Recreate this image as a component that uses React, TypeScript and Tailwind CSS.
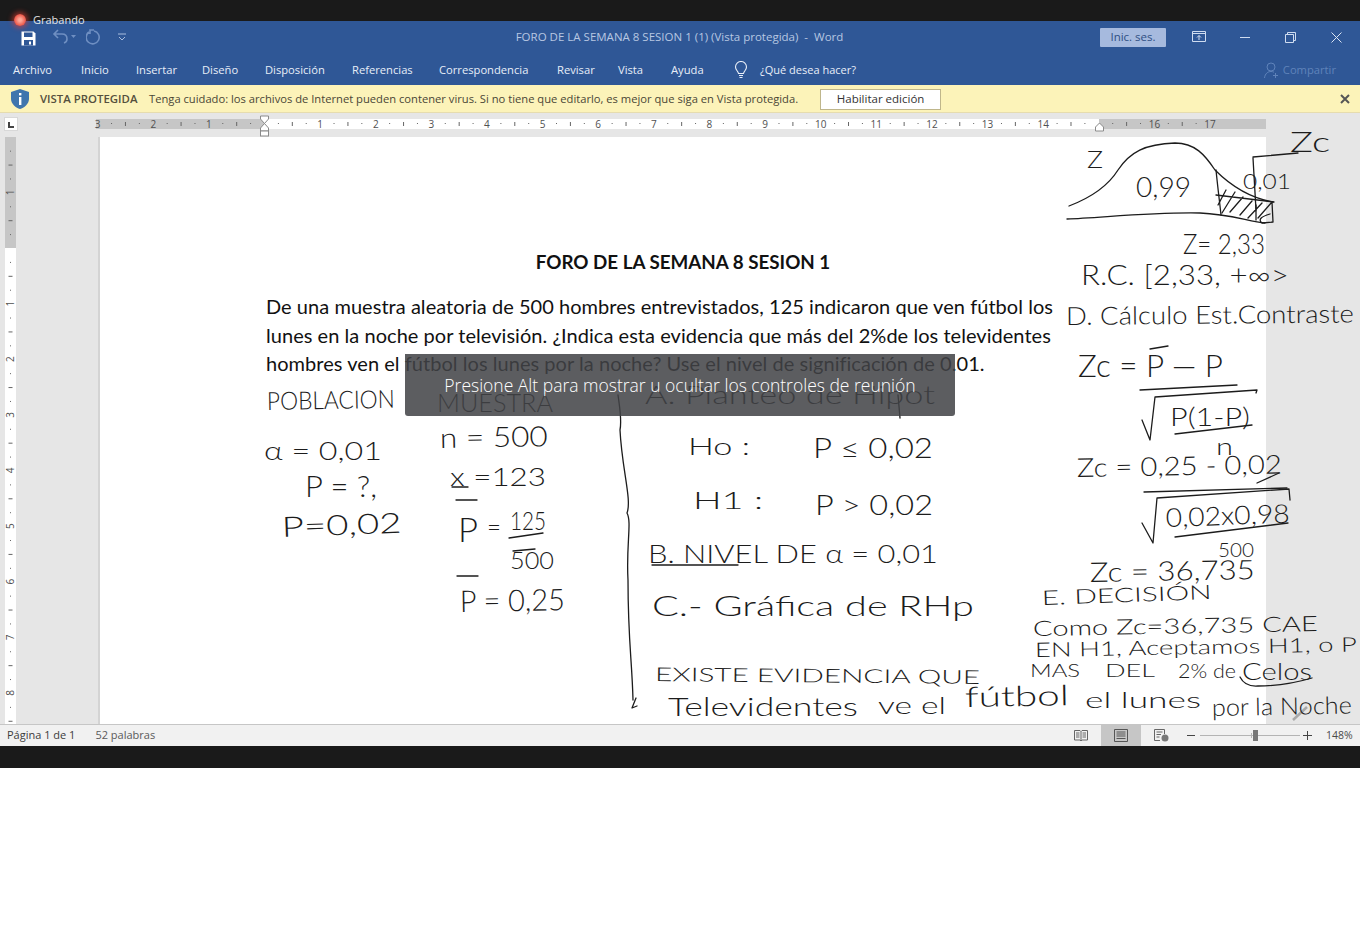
import React from "react";

type Ink = { x: number; y: number; t: string; s: number; w: number; r?: number };

const inks: Ink[] = [
  { x: 267, y: 410, t: "POBLACION", s: 25, w: 128, r: -1 },
  { x: 437, y: 412, t: "MUESTRA", s: 26, w: 116 },
  { x: 645, y: 404, t: "A. Planteo de Hipot", s: 26, w: 290 },
  { x: 264, y: 460, t: "α = 0,01", s: 26, w: 118 },
  { x: 305, y: 497, t: "P = ?,", s: 30, w: 72 },
  { x: 282, y: 537, t: "P=0,02", s: 28, w: 120, r: -2 },
  { x: 440, y: 448, t: "n = 500", s: 28, w: 108, r: -1 },
  { x: 450, y: 486, t: "x =123", s: 26, w: 96 },
  { x: 458, y: 542, t: "P", s: 34, w: 20 },
  { x: 487, y: 536, t: "=", s: 24, w: 14 },
  { x: 510, y: 530, t: "125", s: 26, w: 36 },
  { x: 510, y: 569, t: "500", s: 24, w: 44 },
  { x: 460, y: 612, t: "P = 0,25", s: 30, w: 105, r: -1 },
  { x: 688, y: 455, t: "Ho :", s: 24, w: 62 },
  { x: 813, y: 458, t: "P ≤ 0,02", s: 28, w: 120 },
  { x: 693, y: 509, t: "H1 :", s: 24, w: 70 },
  { x: 815, y: 515, t: "P > 0,02", s: 28, w: 118 },
  { x: 648, y: 563, t: "B. NIVEL DE α = 0,01", s: 26, w: 290 },
  { x: 652, y: 616, t: "C.- Gráfica de RHp", s: 28, w: 322 },
  { x: 655, y: 681, t: "EXISTE EVIDENCIA QUE", s: 19, w: 325, r: 0.5 },
  { x: 1030, y: 677, t: "MAS", s: 18, w: 50 },
  { x: 1105, y: 677, t: "DEL", s: 18, w: 50 },
  { x: 1178, y: 678, t: "2% de", s: 20, w: 58 },
  { x: 1242, y: 680, t: "Celos", s: 24, w: 70 },
  { x: 668, y: 716, t: "Televidentes", s: 26, w: 190 },
  { x: 878, y: 714, t: "ve el", s: 24, w: 68 },
  { x: 965, y: 707, t: "fútbol", s: 28, w: 104, r: -1 },
  { x: 1085, y: 708, t: "el lunes", s: 22, w: 116 },
  { x: 1212, y: 716, t: "por la Noche", s: 24, w: 140, r: -1 },
  { x: 1087, y: 168, t: "Z", s: 24, w: 16 },
  { x: 1290, y: 152, t: "Zc", s: 28, w: 40 },
  { x: 1136, y: 197, t: "0,99", s: 28, w: 55 },
  { x: 1243, y: 189, t: "0,01", s: 22, w: 48 },
  { x: 1183, y: 254, t: "Z= 2,33", s: 28, w: 82 },
  { x: 1081, y: 285, t: "R.C. [2,33, +∞>", s: 27, w: 208 },
  { x: 1066, y: 325, t: "D. Cálculo Est.Contraste", s: 25, w: 288, r: -0.5 },
  { x: 1078, y: 377, t: "Zc = P — P", s: 32, w: 145 },
  { x: 1170, y: 426, t: "P(1-P)", s: 25, w: 80 },
  { x: 1077, y: 477, t: "Zc = 0,25 - 0,02", s: 26, w: 205, r: -1 },
  { x: 1216, y: 455, t: "n", s: 24, w: 17 },
  { x: 1166, y: 527, t: "0,02x0,98", s: 26, w: 124, r: -2 },
  { x: 1218, y: 557, t: "500", s: 20, w: 36 },
  { x: 1090, y: 582, t: "Zc = 36,735", s: 27, w: 165, r: -1 },
  { x: 1042, y: 605, t: "E. DECISIÓN", s: 20, w: 170, r: -2 },
  { x: 1033, y: 636, t: "Como Zc=36,735 CAE", s: 21, w: 285, r: -1 },
  { x: 1035, y: 657, t: "EN H1, Aceptamos H1, o P", s: 20, w: 322, r: -1 },
];

const strokes = [
  "M1069 206 C1090 198 1108 186 1118 170 C1130 152 1145 144 1175 143 C1195 143 1205 155 1215 170 C1230 185 1250 198 1273 202",
  "M1067 219 C1100 218 1150 212 1200 213 C1230 214 1250 222 1265 223",
  "M1216 170 C1218 190 1220 205 1221 215",
  "M1226 190 L1218 205 M1235 192 L1222 213 M1243 197 L1230 212 M1252 201 L1240 215 M1262 203 L1248 218 M1272 202 L1258 218 M1216 195 L1274 202 M1256 205 L1256 220 M1272 202 L1273 222 L1262 223 Q1256 218 1270 214",
  "M1253 158 L1256 210 M1253 157 L1298 153",
  "M1140 390 Q1195 387 1237 385",
  "M1142 420 L1150 440 L1155 397 L1257 390 L1256 393",
  "M1175 434 L1252 425",
  "M1144 492 L1287 488",
  "M1142 523 L1153 543 L1157 498 L1289 489 L1290 500 M1175 537 L1288 523",
  "M1257 483 L1279 473",
  "M1150 349 L1168 346",
  "M618 395 C620 410 622 420 620 430 C622 470 632 500 627 513 C632 522 626 545 628 580 C628 640 632 660 633 700 M636 698 L632 708 L637 706",
  "M652 565 L738 565",
  "M456 500 L477 500",
  "M509 538 L543 533",
  "M457 576 L478 576",
  "M452 487 L468 487",
  "M513 551 L535 549",
  "M1240 677 Q1245 687 1258 686 Q1285 686 1312 678",
  "M898 395 L900 418",
];

const ruler: number[] = Array.from({ length: 21 }, (_, i) => i - 3);

function Ruler() {
  const u = 55.62;
  const z = 264.5;
  return (
    <svg width="1270" height="24" viewBox="0 0 1270 24" className="block" style={{ fontFamily: "Open Sans, sans-serif" }}>
      <rect x="96" y="6" width="1170" height="10" fill="#c6c6c6" />
      <rect x="264" y="6" width="835" height="10" fill="#ffffff" />
      {ruler.map((n) => {
        const x = z + n * u;
        return (
          <g key={n}>
            {n !== 0 && n !== 15 && (
              <text x={x} y="15" textAnchor="middle" fontSize="10" fill="#505050">
                {Math.abs(n)}
              </text>
            )}
            {n < 17 && (
              <g fill="#666666">
                <rect x={x + u * 0.25 - 0.5} y="10" width="1" height="1" />
                <rect x={x + u * 0.5 - 0.5} y="9" width="1" height="4" />
                <rect x={x + u * 0.75 - 0.5} y="10" width="1" height="1" />
              </g>
            )}
          </g>
        );
      })}
      <path d="M260.5 3 H268.5 V6 L264.5 10.5 L260.5 6 Z M264.5 10.5 L268.5 15 V18 H260.5 V15 Z" fill="#ffffff" stroke="#8a8a8a" />
      <rect x="260.5" y="18" width="8" height="5" fill="#ffffff" stroke="#8a8a8a" />
      <path d="M1095.5 18 V14 L1099.5 10 L1103.5 14 V18 Z" fill="#ffffff" stroke="#8a8a8a" />
    </svg>
  );
}

function VRuler() {
  const u = 55.62;
  const z = 248;
  const ticks = Array.from({ length: 11 }, (_, i) => i - 2);
  return (
    <svg width="11" height="587" viewBox="0 0 11 587" className="block" style={{ fontFamily: "Open Sans, sans-serif" }}>
      <rect width="11" height="111" fill="#c6c6c6" />
      <rect y="111" width="11" height="476" fill="#ffffff" />
      {ticks.map((n) => {
        const y = z - 137 + n * u;
        return (
          <g key={n}>
            {n !== 0 && n !== -2 && (
              <text x="5.5" y={y} transform={`rotate(-90 5.5 ${y})`} textAnchor="middle" dominantBaseline="central" fontSize="10" fill="#505050">
                {Math.abs(n)}
              </text>
            )}
            <g fill="#666666">
              <rect x="5" y={y + u * 0.25} width="1" height="1" />
              <rect x="3.5" y={y + u * 0.5} width="4" height="1" />
              <rect x="5" y={y + u * 0.75} width="1" height="1" />
            </g>
          </g>
        );
      })}
    </svg>
  );
}

function InkLayer() {
  return (
    <svg
      className="absolute left-0 top-0 overflow-visible"
      width="1360"
      height="587"
      viewBox="0 137 1360 587"
      style={{ fontFamily: "Lato, sans-serif" }}
    >
      <g fill="none" stroke="#1c1c1c" strokeWidth="1.3" strokeLinecap="round" strokeLinejoin="round">
        {strokes.map((d, i) => (
          <path key={i} d={d} />
        ))}
      </g>
      <path d="M1307 707 L1293 720" fill="none" stroke="#a8a8a8" strokeWidth="2.5" />
      {inks.map((k, i) => (
        <text
          key={i}
          x={k.x}
          y={k.y}
          fontSize={k.s}
          fontWeight={300}
          fill="#1c1c1c"
          textLength={k.w}
          lengthAdjust="spacingAndGlyphs"
          transform={k.r ? `rotate(${k.r} ${k.x} ${k.y})` : undefined}
        >
          {k.t}
        </text>
      ))}
    </svg>
  );
}

const tabs = [
  ["Archivo", "w-[81px] pl-[13px]"],
  ["Inicio", "w-[55px]"],
  ["Insertar", "w-[66px]"],
  ["Diseño", "w-[63px]"],
  ["Disposición", "w-[87px]"],
  ["Referencias", "w-[87px]"],
  ["Correspondencia", "w-[118px]"],
  ["Revisar", "w-[61px]"],
  ["Vista", "w-[53px]"],
  ["Ayuda", "w-[63px]"],
];

export default function App() {
  return (
    <div className="relative min-h-[944px] bg-white overflow-hidden font-['Open_Sans',sans-serif]">
      <div className="h-[21px] bg-[#1a1a1a]" />

      <div className="h-[64px] bg-[#2f5796] text-white">
        <div className="h-[32px] flex items-center relative">
          <div className="w-[43px] flex justify-end pr-[7px] pt-[2px]">
            <svg width="15" height="15" viewBox="0 0 15 15">
              <path d="M0.5 0.5 H12.5 L14.5 2.5 V14.5 H0.5 Z" fill="#ffffff" />
              <rect x="3" y="1.5" width="8.5" height="4.5" fill="#2f5796" />
              <rect x="3" y="9" width="9" height="5.5" fill="#2f5796" />
              <rect x="8" y="10.5" width="2" height="3" fill="#ffffff" />
            </svg>
          </div>
          <svg width="24" height="16" viewBox="0 0 24 16" className="ml-[9px]" fill="none" stroke="#6f8fc2" strokeWidth="1.6">
            <path d="M6 1 L2 5 L6 9 M2 5 H10 Q15 5 15 10 Q15 13 12 14" />
            <path d="M19 6 H24 L21.500 9 Z" fill="#6f8fc2" stroke="none" />
          </svg>
          <svg width="16" height="16" viewBox="0 0 16 16" className="ml-[10px]" fill="none" stroke="#6f8fc2" strokeWidth="1.6">
            <path d="M3 3 A6.500 6.500 0 1 0 8 2 M8 1 L4 1 L4 5" />
          </svg>
          <svg width="10" height="8" viewBox="0 0 10 8" className="ml-[15px]" fill="none" stroke="#a9bddd" strokeWidth="1">
            <path d="M1 1 H9 M2 4 L5 7 L8 4" />
          </svg>
          <div className="absolute left-0 right-0 top-0 h-[32px] flex items-center justify-center text-[11.5px] text-[#b7c7e2] pr-[1px]">
            FORO DE LA SEMANA 8 SESION 1 (1) (Vista protegida)&nbsp; -&nbsp; Word
          </div>
          <div className="ml-auto flex items-center relative">
            <div className="w-[66px] h-[19px] bg-[#a6bade] text-[#2f4f83] text-[11.5px] flex items-center justify-center rounded-[1px]">
              Inic. ses.
            </div>
            <svg width="14" height="12" viewBox="0 0 14 12" className="ml-[26px]" fill="none" stroke="#cfdcf0">
              <path d="M0.500 0.500 H13.500 V10.500 H0.500 Z M0.500 2.500 H13.500 M7 9 V4.500 M5 6.500 L7 4.500 L9 6.500" />
            </svg>
            <svg width="12" height="12" viewBox="0 0 12 12" className="ml-[33px]" stroke="#cfdcf0">
              <path d="M1 6.500 H11" />
            </svg>
            <svg width="11" height="11" viewBox="0 0 11 11" className="ml-[34px]" fill="none" stroke="#cfdcf0">
              <path d="M2.500 2.500 V0.500 H10.500 V8.500 H8.500 M0.500 2.500 H8.500 V10.500 H0.500 Z" />
            </svg>
            <svg width="11" height="11" viewBox="0 0 11 11" className="ml-[35px] mr-[18px]" fill="none" stroke="#dbe5f4">
              <path d="M0.500 0.500 L10.500 10.500 M10.500 0.500 L0.500 10.500" />
            </svg>
          </div>
        </div>
        <div className="h-[32px] flex items-center text-[11.2px] text-[#e8eef8] pt-[2px]">
          {tabs.map(([t, c]) => (
            <div key={t} className={c}>
              {t}
            </div>
          ))}
          <svg width="16" height="18" viewBox="0 0 16 18" fill="none" stroke="#e8eef8" strokeWidth="1.1" className="ml-[-1px]">
            <path d="M5.500 12.500 C5 10 2.500 9 2.500 6 A5.500 5.500 0 0 1 13.500 6 C13.500 9 11 10 10.500 12.500 Z M6 14.500 H10 M6.500 16.500 H9.500" />
          </svg>
          <div className="ml-[11px] text-[11px]">¿Qué desea hacer?</div>
          <div className="ml-auto flex items-center gap-[4px] pr-[24px] text-[#5f83ba]">
            <svg width="15" height="17" viewBox="0 0 15 17" fill="none" stroke="#5f83ba">
              <circle cx="7" cy="5" r="4" />
              <path d="M0.500 16 C1 11.500 4 9.500 7 9.500 C8 9.500 9 9.700 10 10.200 M11.500 11 V16 M9 13.500 H14" />
            </svg>
            <span>Compartir</span>
          </div>
        </div>
      </div>

      <div className="h-[28px] bg-[#fcf3b9] border-b border-[#e6dcae] flex items-center text-[#4a4636] pt-[1px]">
        <svg width="20" height="22" viewBox="0 0 20 22" className="ml-[10px]">
          <path d="M10 1 L19 4 V11 C19 16 14 20 10 21 C6 20 1 16 1 11 V4 Z" fill="#3f75ad" />
          <rect x="9" y="5" width="2.400" height="2.400" fill="#ffffff" />
          <rect x="9" y="9" width="2.400" height="8" fill="#ffffff" />
        </svg>
        <span className="ml-[10px] font-semibold text-[11.4px] text-[#55503d] w-[109px] whitespace-nowrap">VISTA PROTEGIDA</span>
        <span className="text-[11.2px] whitespace-nowrap">
          Tenga cuidado: los archivos de Internet pueden contener virus. Si no tiene que editarlo, es mejor que siga en Vista protegida.
        </span>
        <div className="ml-[22px] w-[121px] h-[21px] bg-white border border-[#bfb68b] flex items-center justify-center text-[11.5px] text-[#333333]">
          Habilitar edición
        </div>
        <svg width="10" height="10" viewBox="0 0 10 10" className="ml-auto mr-[10px]" stroke="#555555" strokeWidth="2">
          <path d="M1 1 L9 9 M9 1 L1 9" />
        </svg>
      </div>

      <div className="h-[24px] bg-[#e6e6e6] flex items-start relative">
        <div className="absolute left-0 top-0">
          <Ruler />
        </div>
        <div className="relative w-[14px] h-[14px] ml-[4px] mt-[4px] bg-white border border-[#d8d8d8] flex items-end justify-center pb-[2px] shrink-0">
          <div className="w-[6px] h-[6px] border-l-2 border-b-2 border-[#444444]" />
        </div>
      </div>

      <div className="h-[587px] bg-[#e6e6e6] flex relative">
        <div className="w-[5px]" />
        <VRuler />
        <div className="w-[84px] border-r-[2px] border-[#d4d4d4]" />
        <div className="w-[1166px] bg-white text-[#111111] font-['Lato',sans-serif]">
          <div className="pt-[111px]">
            <h1 className="text-center font-bold text-[18.800px] leading-[28px]">FORO DE LA SEMANA 8 SESION 1</h1>
            <p className="mt-[16px] ml-[166px] w-[788px] text-[20px] leading-[28.500px] tracking-[0.04px]">
              De una muestra aleatoria de 500 hombres entrevistados, 125 indicaron que ven fútbol los lunes en la noche por televisión. ¿Indica esta evidencia que más del 2%de los televidentes hombres ven el fútbol los lunes por la noche? Use el nivel de significación de 0.01.
            </p>
          </div>
        </div>
        <InkLayer />
      </div>

      <div className="h-[22px] bg-[#f1f1f1] border-t border-[#c6c6c6] flex items-center text-[11px] text-[#3c3c3c] relative">
        <span className="ml-[7px]">Página 1 de 1</span>
        <span className="ml-[20px] text-[#5a5a5a]">52 palabras</span>
        <div className="ml-auto flex items-center h-full">
          <svg width="14" height="13" viewBox="0 0 14 13" fill="none" stroke="#666666">
            <path d="M0.500 1.500 H6 L7 2.500 L8 1.500 H13.500 V11 H8 L7 12 L6 11 H0.500 Z M7 2.500 V11 M2 4 H5.500 M2 6 H5.500 M2 8 H5.500 M8.500 4 H12 M8.500 6 H12 M8.500 8 H12" />
          </svg>
          <div className="ml-[13px] w-[40px] h-full bg-[#c6c6c6] flex items-center justify-center">
            <svg width="14" height="13" viewBox="0 0 14 13" fill="none" stroke="#555555">
              <path d="M0.500 0.500 H13.500 V12.500 H0.500 Z M2.500 3 H11.500 M2.500 5 H11.500 M2.500 7 H11.500 M2.500 9.500 H11.500" />
            </svg>
          </div>
          <svg width="15" height="13" viewBox="0 0 15 13" className="ml-[13px]" fill="none" stroke="#666666">
            <path d="M0.500 0.500 H10.500 V5 M0.500 0.500 V11.500 H6 M2.500 3 H8.500 M2.500 5.500 H7 M2.500 8 H5.500" />
            <circle cx="11" cy="9" r="3.500" fill="#777777" stroke="none" />
          </svg>
          <div className="ml-[18px] w-[8px] h-[1px] bg-[#444444]" />
          <div className="ml-[5px] w-[100px] h-[1px] bg-[#b4b4b4] relative">
            <div className="absolute left-[53px] top-[-5px] w-[5px] h-[11px] bg-[#777777]" />
            <div className="absolute left-[51px] top-[-2px] w-[1px] h-[5px] bg-[#b4b4b4]" />
          </div>
          <div className="ml-[3px] w-[9px] h-[9px] relative">
            <div className="absolute left-0 top-[4px] w-[9px] h-[1px] bg-[#444444]" />
            <div className="absolute left-[4px] top-0 w-[1px] h-[9px] bg-[#444444]" />
          </div>
          <span className="ml-[14px] w-[26px] mr-[8px] text-[10.500px] text-[#4a4a4a] whitespace-nowrap">148%</span>
        </div>
      </div>

      <div className="h-[22px] bg-[#1a1a1a]" />

      <div className="absolute left-[405px] top-[354px] w-[550px] h-[62px] bg-[#414246]/[0.86] rounded-b-[3px] flex items-center justify-center text-white text-[17.500px] font-['Open_Sans',sans-serif] font-light">
        <span>Presione Alt para mostrar u ocultar los controles de reunión</span>
      </div>

      <div className="absolute left-[14px] top-[14px] w-[12px] h-[12px] rounded-full bg-[radial-gradient(circle,#ffa898_15%,#e84a3c_75%)] shadow-[0_0_5px_2px_rgba(230,60,50,0.6)]" />
      <div className="absolute left-[33px] top-[12px] text-[11px] text-[#e4e4e4]">Grabando</div>
    </div>
  );
}
